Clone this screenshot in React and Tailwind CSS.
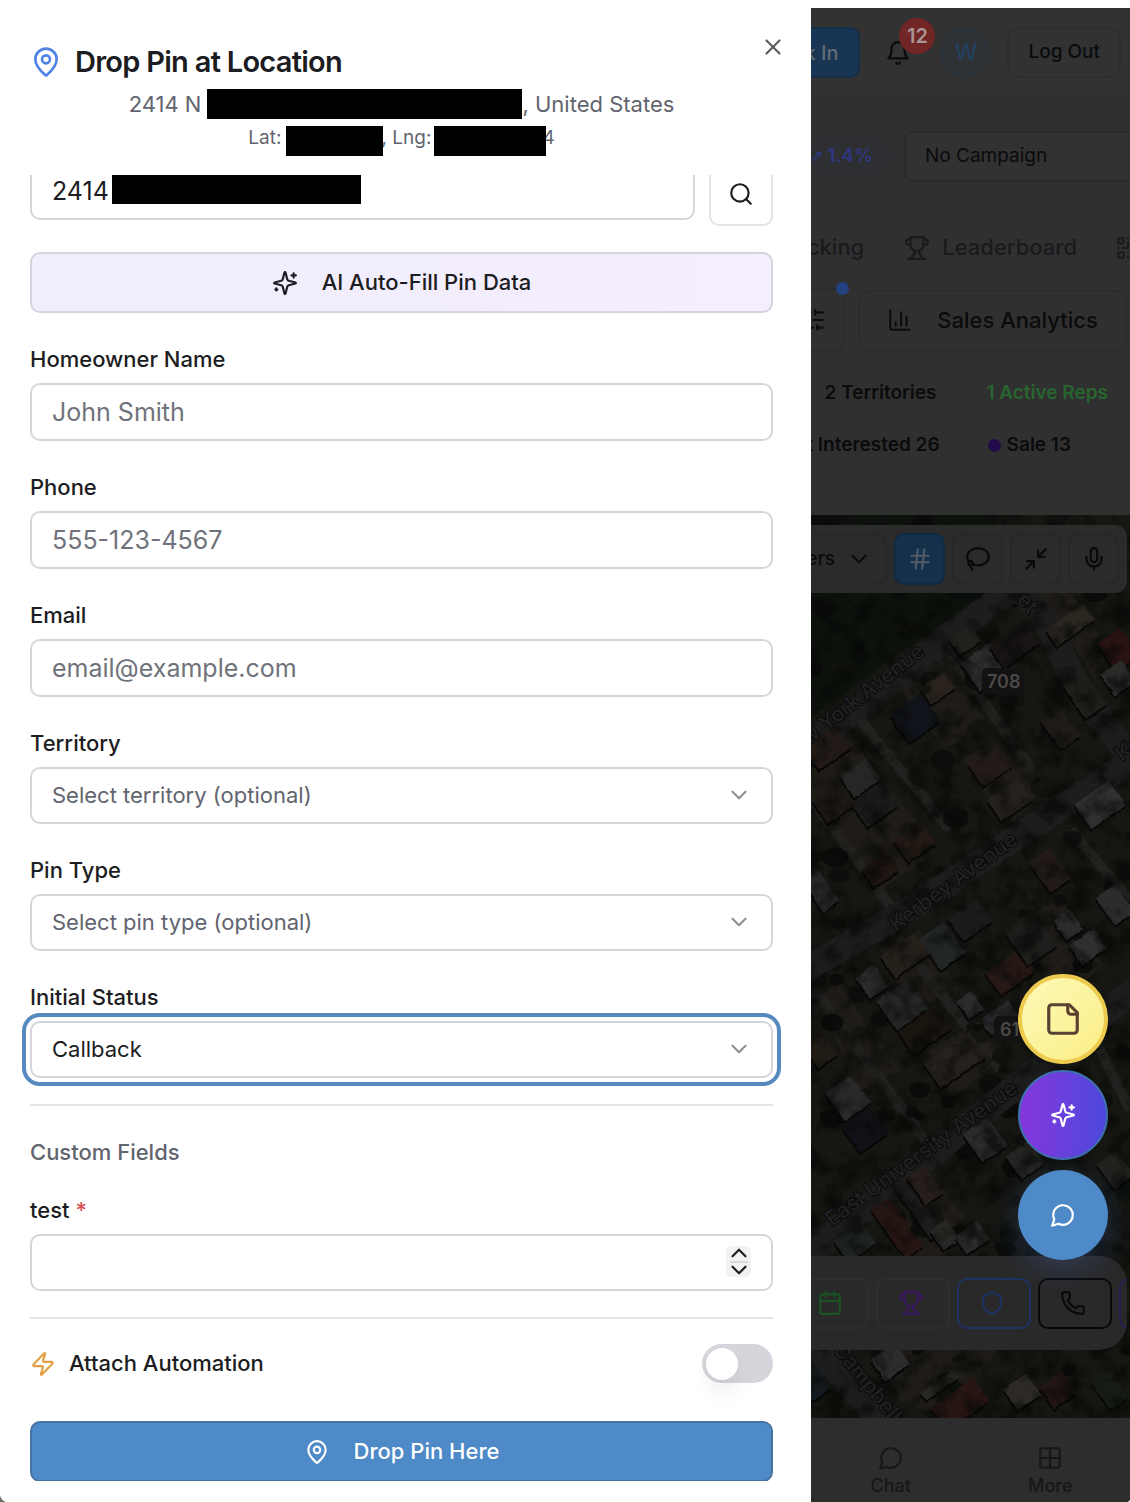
import React, { useState } from "react";
import {
  Calendar,
  ChevronDown,
  ChevronUp,
  Grid2x2,
  Hash,
  Lasso,
  MapPin,
  Mic,
  Minimize2,
  MoveUpRight,
  Phone,
  QrCode,
  Search,
  Shield,
  SlidersHorizontal,
  X,
  Zap,
} from "lucide-react";

function Icon({ size = 26, className = "", children }) {
  return (
    <svg
      width={size}
      height={size}
      viewBox="0 0 24 24"
      fill="none"
      stroke="currentColor"
      strokeWidth="2"
      strokeLinecap="round"
      strokeLinejoin="round"
      className={className}
      aria-hidden="true"
    >
      {children}
    </svg>
  );
}

const Sparkles = (props) => (
  <Icon {...props}>
    <path d="M9.937 15.5A2 2 0 0 0 8.5 14.063l-6.135-1.582a.5.5 0 0 1 0-.962L8.5 9.936A2 2 0 0 0 9.937 8.5l1.582-6.135a.5.5 0 0 1 .963 0L14.063 8.5A2 2 0 0 0 15.5 9.937l6.135 1.581a.5.5 0 0 1 0 .964L15.5 14.063a2 2 0 0 0-1.437 1.437l-1.582 6.135a.5.5 0 0 1-.963 0z" />
    <path d="M20 3v4M22 5h-4M4 17v2M5 18H3" />
  </Icon>
);

const Trophy = (props) => (
  <Icon {...props}>
    <path d="M6 9H4.5a2.5 2.5 0 0 1 0-5H6M18 9h1.5a2.5 2.5 0 0 0 0-5H18M4 22h16" />
    <path d="M10 14.66V17c0 .55-.47.98-.97 1.21C7.85 18.75 7 20.24 7 22M14 14.66V17c0 .55.47.98.97 1.21C16.15 18.75 17 20.24 17 22" />
    <path d="M18 2H6v7a6 6 0 0 0 12 0V2Z" />
  </Icon>
);

const Bell = (props) => (
  <Icon {...props}>
    <path d="M6 8a6 6 0 0 1 12 0c0 7 3 9 3 9H3s3-2 3-9M10.3 21a1.94 1.94 0 0 0 3.4 0" />
  </Icon>
);

const Chat = (props) => (
  <Icon {...props}>
    <path d="M7.9 20A9 9 0 1 0 4 16.1L2 22Z" />
  </Icon>
);

const Note = (props) => (
  <Icon {...props}>
    <path d="M16 3H5a2 2 0 0 0-2 2v14a2 2 0 0 0 2 2h14a2 2 0 0 0 2-2V8Z" />
    <path d="M15 3v4a2 2 0 0 0 2 2h4" />
  </Icon>
);

const Chart = (props) => (
  <Icon {...props}>
    <path d="M3 3v16a2 2 0 0 0 2 2h16M18 17V9M13 17V5M8 17v-3" />
  </Icon>
);

const fieldBase =
  "block w-full rounded-[10px] border-2 border-[#d5d6db] bg-white px-5 text-[#1c1d22] outline-none";

function TextField({ id, label, placeholder, type = "text" }) {
  return (
    <div className="flex flex-col gap-3">
      <label htmlFor={id} className="text-[22px] leading-6 font-medium">
        {label}
      </label>
      <input
        id={id}
        type={type}
        placeholder={placeholder}
        className={`${fieldBase} h-[58px] text-[25px] placeholder:text-[#70727b]`}
      />
    </div>
  );
}

function SelectField({ id, label, options, focused }) {
  return (
    <div className="flex flex-col gap-3">
      <label htmlFor={id} className="text-[22px] leading-6 font-medium">
        {label}
      </label>
      <div className="relative">
        <select
          id={id}
          className={
            focused
              ? `${fieldBase} h-[57px] appearance-none text-[22px] outline-4 outline-offset-4 outline-solid outline-[#5589c0]`
              : "block h-[57px] w-full appearance-none rounded-[10px] border-2 border-[#d5d6db] bg-white px-5 text-[22px] text-[#62646e] outline-none"
          }
        >
          {options.map((o) => (
            <option key={o}>{o}</option>
          ))}
        </select>
        <ChevronDown
          size={26}
          className="pointer-events-none absolute top-[15px] right-[21px] text-[#8e8f93]"
        />
      </div>
    </div>
  );
}

function PinSheet() {
  const [attach, setAttach] = useState(false);
  return (
    <main className="flex min-w-0 flex-1 flex-col rounded-bl-lg bg-white pb-[21px] text-[#1c1d22]">
      <header className="relative flex h-[175px] shrink-0 flex-col pt-11 pr-[38px] pl-[30px]">
        <button
          type="button"
          aria-label="Close"
          className="absolute top-[34px] right-[25px] text-[#5b5c60]"
        >
          <X size={26} />
        </button>
        <h1 className="flex items-center gap-[13px] text-[29px] leading-9 font-semibold tracking-tight">
          <MapPin size={32} className="text-[#4f83e6]" />
          Drop Pin at Location
        </h1>
        <p className="mt-2 flex items-center justify-center text-[22px] leading-8 text-[#62646e]">
          2414 N
          <span className="ml-1.5 h-[30px] w-[315px] bg-black" />
          , United States
        </p>
        <p className="flex items-start justify-center text-[19px] leading-9 text-[#62646e]">
          Lat:
          <span className="relative z-10 mt-1.5 ml-[5px] h-[30px] w-[97px] bg-black" />
          <span className="-ml-0.5">, Lng:</span>
          <span className="relative z-10 mt-1.5 ml-[3px] h-[30px] w-[112px] bg-black" />
          <span className="-ml-1">4</span>
        </p>
      </header>

      <form
        className="flex min-h-0 flex-1 flex-col overflow-y-auto pr-[38px] pl-[30px] [scrollbar-width:none]"
        onSubmit={(e) => e.preventDefault()}
      >
        <div className="-mt-[13px] flex shrink-0 items-start gap-[14px]">
          <div className="relative flex-1">
            <input
              aria-label="Address"
              defaultValue="2414"
              className={`${fieldBase} h-[58px] text-[25px]`}
            />
            <span className="absolute top-3 left-[82px] h-[30px] w-[249px] bg-black" />
          </div>
          <button
            type="button"
            aria-label="Search address"
            className="flex size-16 items-center justify-center rounded-[10px] border-2 border-[#e4e4e6]"
          >
            <Search size={26} />
          </button>
        </div>

        <button
          type="button"
          className="mt-[26px] flex h-[61px] shrink-0 items-center justify-center gap-6 rounded-[10px] border-2 border-[#d6d3df] bg-linear-to-r from-[#f1edfc] to-[#f4eefd] text-[22px] font-medium"
        >
          <Sparkles />
          AI Auto-Fill Pin Data
        </button>

        <div className="mt-[34px] flex shrink-0 flex-col gap-[34px]">
          <TextField id="name" label="Homeowner Name" placeholder="John Smith" />
          <TextField id="phone" label="Phone" type="tel" placeholder="555-123-4567" />
          <TextField id="email" label="Email" type="email" placeholder="email@example.com" />
          <SelectField id="territory" label="Territory" options={["Select territory (optional)"]} />
          <SelectField id="pin-type" label="Pin Type" options={["Select pin type (optional)"]} />
          <SelectField id="status" label="Initial Status" options={["Callback"]} focused />
        </div>

        <section className="mt-[26px] flex shrink-0 flex-col border-t-2 border-[#e4e4e6] pt-[34px]">
          <h2 className="text-[22px] leading-6 font-medium text-[#62646e]">Custom Fields</h2>
          <label htmlFor="test" className="mt-[34px] text-[22px] leading-6 font-medium">
            test <span className="text-[#dc5252]">*</span>
          </label>
          <div className="relative mt-3">
            <input
              id="test"
              type="number"
              className={`${fieldBase} h-[57px] [appearance:textfield] text-[25px]`}
            />
            <div className="absolute top-3 right-[22px] flex h-[31px] w-[25px] flex-col items-center justify-between rounded-md bg-[#f2f2f2]">
              <button type="button" aria-label="Increase" className="flex h-[14px] items-center">
                <ChevronUp size={26} className="shrink-0" />
              </button>
              <span className="h-0.5 w-[18px] shrink-0 bg-[#dadada]" />
              <button type="button" aria-label="Decrease" className="flex h-[14px] items-center">
                <ChevronDown size={26} className="shrink-0" />
              </button>
            </div>
          </div>
        </section>

        <section className="mt-[26px] flex shrink-0 items-center justify-between border-t-2 border-[#e4e4e6] pt-[25px]">
          <label htmlFor="attach" className="flex items-center gap-[13px] text-[22px] font-medium">
            <Zap size={26} className="text-[#e3a147]" />
            Attach Automation
          </label>
          <input
            id="attach"
            type="checkbox"
            role="switch"
            checked={attach}
            onChange={(e) => setAttach(e.target.checked)}
            className="h-[39px] w-[71px] appearance-none rounded-full bg-[#d5d6dc] p-1 before:block before:size-8 before:rounded-full before:bg-white before:shadow-[0_14px_20px_rgba(0,0,0,0.06)] checked:bg-[#4e8ac8] checked:before:ml-8"
          />
        </section>

        <button
          type="submit"
          className="mt-[38px] flex h-[61px] shrink-0 items-center justify-center gap-6 rounded-[10px] border-2 border-[#4573a3] bg-[#4e8ac8] text-[22px] font-medium text-white"
        >
          <MapPin size={26} />
          Drop Pin Here
        </button>
      </form>
    </main>
  );
}

const roads = [
  "M800 752L1010 590L1040 575",
  "M1000 575Q1040 600 1060 650T1135 760",
  "M800 972L900 915L1140 755",
  "M800 1262L1140 985",
  "M800 1330L900 1440",
];
const alleys = [
  "M942 640L1052 800",
  "M898 938L1000 1070",
  "M812 800L905 925",
  "M815 990L925 1140",
  "M860 720L950 830",
  "M1070 830L1130 900",
  "M1100 1050L1130 1110",
];
// Pale yards between the rows of houses.
const yards = [
  "M900 690L940 660L985 720L945 750Z",
  "M960 760L1000 740L1045 790L1010 825Z",
  "M811 770L850 740L940 850L880 890L811 800Z",
  "M1010 925L1060 900L1110 960L1060 1000Z",
  "M930 1050L980 1020L1000 1060L950 1100Z",
  "M880 950L920 930L960 990L910 1010Z",
  "M811 990L840 985L900 1070L860 1090Z",
  "M1035 585L1065 585L1110 650L1095 680Z",
  "M870 1190L920 1160L990 1250L900 1260Z",
  "M880 1345L1000 1345L950 1420L900 1400Z",
];
// x, y, width, height, fill
const houses = [
  [985, 667, 36, 34, "#2b2c2d"], [965, 640, 26, 20, "#20211c"], [915, 718, 38, 34, "#11131a"],
  [1015, 645, 44, 26, "#191515"], [938, 688, 30, 20, "#2a231d"], [1118, 650, 28, 34, "#291212"],
  [1118, 678, 26, 26, "#2b2b2a"], [1060, 728, 24, 36, "#1f1b18"], [828, 748, 40, 26, "#211a16"],
  [860, 778, 32, 26, "#262625"], [875, 805, 38, 28, "#1a1b1b"], [990, 765, 36, 28, "#231b17"],
  [1010, 800, 38, 26, "#26211d"], [833, 803, 32, 28, "#201a16"], [942, 946, 30, 38, "#232627"],
  [970, 920, 36, 28, "#1a1b1b"], [905, 955, 42, 26, "#26201b"], [872, 982, 22, 26, "#2a2b2a"],
  [902, 1005, 38, 36, "#242726"], [1010, 972, 42, 28, "#251815"], [1032, 940, 36, 38, "#1f1e1c"],
  [925, 1030, 46, 28, "#1b1510"], [955, 1060, 56, 30, "#26211c"], [970, 1005, 18, 22, "#2b2c2b"],
  [1000, 1018, 34, 20, "#28272b"], [848, 1098, 32, 34, "#29292a"], [865, 1130, 34, 32, "#111217"],
  [820, 1050, 24, 28, "#211b16"], [1050, 870, 26, 38, "#211a17"], [1068, 925, 20, 24, "#2b2c2c"],
  [1088, 947, 30, 24, "#2e2f2e"], [1115, 905, 24, 34, "#2b2c2c"], [985, 1140, 30, 34, "#2a2b2c"],
  [1025, 1160, 28, 28, "#262524"], [897, 1228, 22, 60, "#261613"], [922, 1210, 20, 60, "#1c1c1b"],
  [945, 1235, 20, 24, "#292725"], [972, 1238, 28, 22, "#2b2b2a"], [855, 1242, 34, 26, "#1f2222"],
  [925, 1185, 22, 34, "#261e1a"], [960, 1404, 52, 28, "#271613"], [1022, 1392, 28, 26, "#2c2926"],
  [1058, 1390, 28, 26, "#221513"], [890, 1362, 30, 26, "#2d2d2d"], [940, 1385, 40, 10, "#282723"],
  [815, 1385, 24, 24, "#151a1f"], [1100, 805, 42, 30, "#303030"], [1085, 695, 26, 40, "#201e1a"],
  [880, 870, 30, 22, "#231814"], [915, 842, 34, 26, "#231a15"], [820, 890, 20, 40, "#252627"],
  [1070, 625, 46, 20, "#2a2620"], [1115, 1170, 24, 30, "#23211e"], [1110, 1390, 22, 34, "#171b15"],
];
const trees = Array.from({ length: 150 }, (_, i) => {
  const h = (n) => {
    const v = Math.sin(i * 12.9898 + n * 78.233) * 43758.5453;
    return v - Math.floor(v);
  };
  return [811 + h(1) * 319, 515 + h(2) * 903, 4 + h(3) * 10, i % 3];
});

function StreetLabel({ x, y, angle, children }) {
  return (
    <text
      transform={`translate(${x} ${y}) rotate(${angle})`}
      fill="#212123"
      stroke="#09090a"
      strokeWidth="2"
      paintOrder="stroke"
      fontSize="21"
      fontWeight="500"
    >
      {children}
    </text>
  );
}

function Satellite() {
  return (
    <svg
      viewBox="811 515 319 903"
      preserveAspectRatio="xMidYMid slice"
      className="absolute inset-0 size-full"
      aria-hidden="true"
    >
      <defs>
        <filter id="grain" x="0" y="0" width="100%" height="100%" colorInterpolationFilters="sRGB">
          <feTurbulence type="fractalNoise" baseFrequency="0.045" numOctaves="5" seed="7" />
          <feColorMatrix values="0 0 0 0 0.02  0 0 0 0 0.03  0 0 0 0 0.02  3.2 0 0 0 -1.4" />
        </filter>
        <filter id="rough" x="-5%" y="-5%" width="110%" height="110%" colorInterpolationFilters="sRGB">
          <feTurbulence type="fractalNoise" baseFrequency="0.12" numOctaves="2" seed="3" />
          <feDisplacementMap
            in="SourceGraphic"
            scale="3"
            xChannelSelector="R"
            yChannelSelector="G"
          />
        </filter>
      </defs>
      <rect x="811" y="515" width="319" height="903" fill="#161612" />
      <g filter="url(#rough)">
        <path d="M800 500H1000L985 593L800 725Z" fill="#0e120d" />
        {yards.map((d) => (
          <path key={d} d={d} fill="#1f1c18" />
        ))}
        <g fill="none">
          {alleys.map((d) => (
            <path key={d} d={d} strokeWidth="10" stroke="#22211f" />
          ))}
          {trees.map(([x, y, r, k]) => (
            <ellipse
              key={`${x}`}
              cx={x}
              cy={y}
              rx={r}
              ry={r * 0.8}
              fill={k === 0 ? "#090b09" : k === 1 ? "#0b0e0a" : "#10130d"}
              opacity="0.85"
            />
          ))}
          {roads.map((d) => (
            <path key={d} d={d} strokeWidth="26" stroke="#1d1d1d" />
          ))}
        </g>
        {houses.map(([x, y, w, h, fill]) => (
          <g key={`${x}-${y}`} transform={`rotate(-35 ${x} ${y})`}>
            <rect x={x - w / 2 - 2} y={y - h / 2 + 2} width={w} height={h} fill="#070707" />
            <rect x={x - w / 2} y={y - h / 2} width={w} height={h} fill={fill} />
          </g>
        ))}
      </g>
      <rect x="811" y="515" width="319" height="903" filter="url(#grain)" opacity="0.65" />
      <StreetLabel x={808} y={746} angle={-38}>w York Avenue</StreetLabel>
      <StreetLabel x={896} y={932} angle={-36}>Kerbey Avenue</StreetLabel>
      <StreetLabel x={832} y={1227} angle={-36}>East University Avenue</StreetLabel>
      <StreetLabel x={832} y={1350} angle={51}>Campbell</StreetLabel>
      <StreetLabel x={1016} y={600} angle={50}>et</StreetLabel>
      <StreetLabel x={1122} y={762} angle={-38}>Ke</StreetLabel>
      <g fontSize="18" fontWeight="600" fill="#4a4a4a">
        <rect x="982" y="668" width="42" height="26" rx="5" fill="#131111" />
        <text x="987" y="688">708</text>
        <rect x="994" y="1016" width="43" height="26" rx="5" fill="#131111" />
        <text x="1000" y="1036">61</text>
      </g>
    </svg>
  );
}

const mapTool =
  "flex h-[52px] w-[51px] shrink-0 items-center justify-center rounded-[10px] border-2 border-[#272727] text-[#08090b]";
const actionTool =
  "flex h-[51px] w-[74px] shrink-0 items-center justify-center rounded-[10px] border-2 pr-1";
const fab = "flex size-[90px] items-center justify-center rounded-full";
const chip =
  "flex h-[34px] shrink-0 items-center gap-1.5 rounded-[10px] border-2 border-[#2e2e2f] px-[17px] text-[19px] font-semibold whitespace-nowrap";

function MapPage() {
  return (
    <aside className="mt-2 flex w-[319px] shrink-0 flex-col overflow-hidden rounded-br-sm bg-[#303030] text-[#0a0b0d]">
      <header className="flex h-[91px] shrink-0 items-center justify-end border-b-2 border-[#2d2e32] bg-[#323232] pr-[9px]">
        <button
          type="button"
          className="h-[51px] shrink-0 rounded-[10px] border-2 border-[#142e48] bg-[#183553] px-5 text-[20px] font-medium whitespace-nowrap text-[#626a72]"
        >
          Clock In
        </button>
        <button
          type="button"
          aria-label="Notifications"
          className="relative mr-[30px] ml-[25px] shrink-0"
        >
          <Bell />
          <span className="absolute -top-[22px] left-[14px] flex size-9 items-center justify-center rounded-full bg-[#712525] text-[20px] font-semibold text-[#a89494]">
            12
          </span>
        </button>
        <span className="mr-[17px] flex size-[49px] shrink-0 items-center justify-center rounded-full border-2 border-[#2b343d] bg-[#2f3235] text-[23px] font-medium text-[#23405f]">
          W
        </span>
        <button
          type="button"
          className="h-[51px] shrink-0 rounded-[10px] border-2 border-[#2d2e31] bg-[#323232] px-[19px] text-[19px] font-medium"
        >
          Log Out
        </button>
      </header>

      <div className="flex h-[116px] shrink-0 items-center justify-end border-b-2 border-[#2e2f31]">
        <span className="mr-[11px] flex h-9 shrink-0 items-center gap-1 rounded-full bg-[#2e2f33] px-5 text-[19px] font-semibold text-[#303780]">
          <MoveUpRight size={13} strokeWidth={3} />
          1.4%
        </span>
        <select
          aria-label="Campaign"
          className="-mr-8 h-[51px] w-[258px] shrink-0 appearance-none rounded-[10px] border-2 border-[#2a2b2f] bg-[#323232] px-[19px] text-[19px]"
        >
          <option>No Campaign</option>
        </select>
      </div>

      <nav className="-mr-[11px] flex h-[66px] shrink-0 items-center justify-end border-b border-[#2e2f30] text-[22px] font-medium text-[#191a1e]">
        <a href="#tracking" className="mr-10">
          Tracking
        </a>
        <a href="#leaderboard" className="mr-[38px] flex items-center gap-3">
          <Trophy />
          Leaderboard
        </a>
        <a href="#qr" aria-label="QR codes">
          <QrCode size={26} />
        </a>
      </nav>

      <div className="mt-[7px] flex shrink-0 items-center justify-end gap-[13px] pr-[3px]">
        <button
          type="button"
          aria-label="Filters"
          className="relative flex h-16 w-[72px] shrink-0 items-center justify-end rounded-[10px] border-2 border-[#2c2c2d] pr-[17px]"
        >
          <SlidersHorizontal size={26} />
          <span className="absolute -top-2 -right-1.5 size-[13px] rounded-full bg-[#21427f]" />
        </button>
        <button
          type="button"
          className="flex h-[61px] w-[269px] shrink-0 items-center justify-center gap-6 rounded-[10px] border-2 border-[#2c2c2d] text-[22px] font-medium"
        >
          <Chart />
          Sales Analytics
        </button>
      </div>

      <div className="mt-6 flex shrink-0 justify-end gap-3 pr-[3px]">
        <span className={chip}>2 Territories</span>
        <span className={`${chip} text-[#28652f]`}>1 Active Reps</span>
      </div>
      <div className="mt-[18px] mb-[53px] flex shrink-0 justify-end gap-[10px] pr-10">
        <span className={chip}>Not Interested 26</span>
        <span className={chip}>
          <span className="size-[13px] rounded-full bg-[#250b4a]" />
          Sale 13
        </span>
      </div>

      <div className="relative flex min-h-0 flex-1 flex-col justify-between pt-[10px] pr-[3px] pb-[68px]">
        <Satellite />
        <div className="relative flex h-[68px] shrink-0 items-center justify-end gap-[7px] overflow-hidden rounded-r-xl bg-[#2b2b2b] pr-2">
          <button
            type="button"
            className="flex h-[52px] shrink-0 items-center gap-[11px] rounded-[10px] border-2 border-[#272727] pr-[13px] pl-4 text-[19px] font-medium"
          >
            Layers
            <ChevronDown size={26} />
          </button>
          <button
            type="button"
            aria-label="Grid"
            className="flex h-[52px] w-[51px] shrink-0 items-center justify-center rounded-[10px] border-2 border-[#112a43] bg-[#14304b] text-[#505b67]"
          >
            <Hash size={26} />
          </button>
          <button type="button" aria-label="Lasso" className={mapTool}>
            <Lasso size={26} />
          </button>
          <button type="button" aria-label="Collapse" className={mapTool}>
            <Minimize2 size={26} />
          </button>
          <button type="button" aria-label="Voice" className={mapTool}>
            <Mic size={26} />
          </button>
        </div>

        <div className="relative flex h-[94px] shrink-0 items-center justify-end gap-[7px] overflow-hidden rounded-r-[28px] bg-[#292929]">
          <button type="button" aria-label="Schedule" className={`${actionTool} border-[#2e2e2e] text-[#1a5224]`}>
            <Calendar size={26} />
          </button>
          <button type="button" aria-label="Awards" className={`${actionTool} border-[#2e2e2e] text-[#37185c]`}>
            <Trophy />
          </button>
          <button type="button" aria-label="Protection" className={`${actionTool} border-[#1d3260] text-[#1d3260]`}>
            <Shield size={26} />
          </button>
          <button type="button" aria-label="Call" className={`${actionTool} border-[#08090b]`}>
            <Phone size={26} />
          </button>
          <button
            type="button"
            aria-label="More actions"
            className="-mr-[66px] h-[51px] w-[74px] shrink-0 rounded-[10px] border-2 border-[#251e56]"
          />
        </div>

        <div className="absolute right-[22px] bottom-[158px] flex flex-col">
          <button
            type="button"
            aria-label="Notes"
            className={`${fab} border-4 border-[#eccb4e] bg-linear-to-br from-[#fdf9b8] to-[#fbee85] text-[#5a4030]`}
          >
            <Note size={38} />
          </button>
          <button
            type="button"
            aria-label="Assistant"
            className={`${fab} mt-1.5 border-2 border-[#3f6fae] bg-linear-to-r from-[#8435dc] to-[#4b47dc] text-white`}
          >
            <Sparkles />
          </button>
          <button
            type="button"
            aria-label="Chat"
            className={`${fab} mt-[10px] bg-[#4e8ac8] text-white shadow-[0_8px_30px_rgba(60,90,150,0.4)]`}
          >
            <Chat />
          </button>
        </div>
      </div>

      <nav className="flex h-[84px] shrink-0 items-start bg-[#2d2d2d] pt-[27px] text-[18px] leading-6 font-medium text-[#16171a]">
        <a href="#chat" className="flex flex-1 flex-col items-center gap-[3px]">
          <Chat />
          Chat
        </a>
        <a href="#more" className="flex flex-1 flex-col items-center gap-[3px]">
          <Grid2x2 size={26} />
          More
        </a>
      </nav>
    </aside>
  );
}

export default function App() {
  return (
    <div className="bg-[#6a716b] font-[Inter,sans-serif]">
      <div className="flex h-screen overflow-hidden rounded-bl-lg bg-white">
        <PinSheet />
        <MapPage />
      </div>
    </div>
  );
}
